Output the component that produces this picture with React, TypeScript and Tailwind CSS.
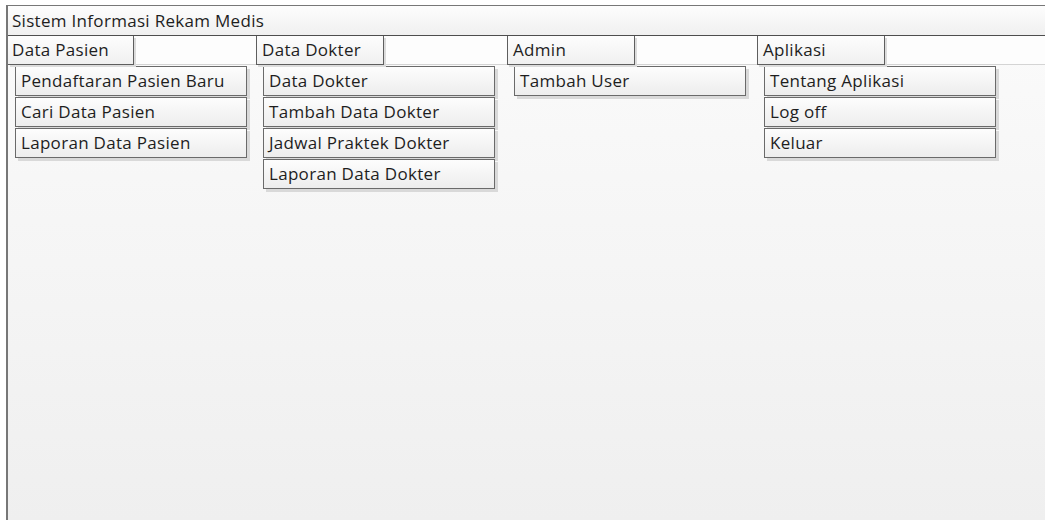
import type { ReactNode } from "react";

type MenuGroup = {
  label: string;
  items: string[];
};

const MENUS: MenuGroup[] = [
  {
    label: "Data Pasien",
    items: ["Pendaftaran Pasien Baru", "Cari Data Pasien", "Laporan Data Pasien"],
  },
  {
    label: "Data Dokter",
    items: ["Data Dokter", "Tambah Data Dokter", "Jadwal Praktek Dokter", "Laporan Data Dokter"],
  },
  { label: "Admin", items: ["Tambah User"] },
  { label: "Aplikasi", items: ["Tentang Aplikasi", "Log off", "Keluar"] },
];

function MenuItem({ children }: { children: ReactNode }) {
  return (
    <div className="flex h-[30px] items-center border border-[#6a6a6a] bg-gradient-to-b from-[#fdfdfd] to-[#ededed] pl-[5px] shadow-[3px_3px_0_#d9d9d9]">
      {children}
    </div>
  );
}

function Group({ group, first }: { group: MenuGroup; first: boolean }) {
  return (
    <div className="flex flex-col">
      <div className="flex h-[29px]">
        <div
          className={`relative z-10 flex items-center border-r border-b border-[#5e5e5e] bg-gradient-to-b from-[#fdfdfd] to-[#f0f0f0] shadow-[2px_2px_0_#dcdcdc] ${
            first ? "w-[126px] pl-[4px]" : "w-[128px] border-l pl-[5px]"
          }`}
        >
          {group.label}
        </div>
        <div className="flex-1 border-b border-[#d4d4d4] bg-[#fdfdfd]" />
      </div>
      <div className="ml-[7px] flex w-[232px] flex-col gap-px pt-px">
        {group.items.map((item) => (
          <MenuItem key={item}>{item}</MenuItem>
        ))}
      </div>
    </div>
  );
}

export default function App() {
  return (
    <div className="h-[520px] w-[1045px] overflow-hidden bg-white font-['Open_Sans',sans-serif] text-[17px] tracking-[0.3px] text-[#1e1e1e]">
      <div className="ml-[6px] mt-[5px] flex h-[560px] w-[1100px] flex-col border-t border-l-2 border-[#777] bg-gradient-to-b from-[#fbfbfb] to-[#eeeeee]">
        <div className="flex h-[30px] shrink-0 items-center border-b border-[#4e4e4e] bg-gradient-to-b from-[#fdfdfd] to-[#f0f0f0] pl-[4px] shadow-[0_3px_0_#e2e2e2]">
          Sistem Informasi Rekam Medis
        </div>
        <div className="grid grid-cols-[248px_251px_250px_1fr]">
          {MENUS.map((g, i) => (
            <Group key={g.label} group={g} first={i === 0} />
          ))}
        </div>
      </div>
    </div>
  );
}
